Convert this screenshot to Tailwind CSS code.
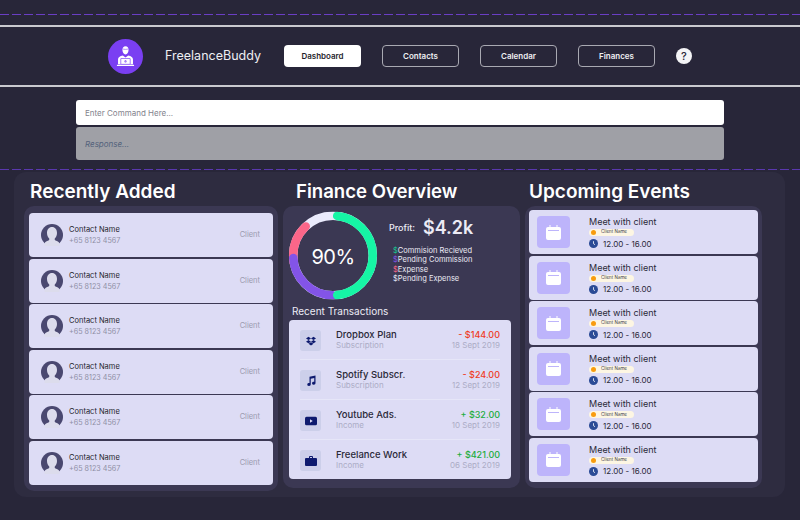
<!DOCTYPE html>
<html lang="en">
<head>
    <meta charset="UTF-8">
    <meta name="viewport" content="width=device-width, initial-scale=1.0">
    <title>FreelanceBuddy</title>
    <script src="https://cdn.jsdelivr.net/npm/@tailwindcss/browser@4"></script>
</head>
<body class="w-[800px] h-[520px] overflow-hidden bg-[#282639] font-[Inter,sans-serif] text-white">
    <!-- Top guides -->
    <div class="pt-[14px]">
        <div class="h-[1px] bg-[repeating-linear-gradient(90deg,#6a3ec4_0_9px,transparent_9px_12px)]"></div>
    </div>
    <div class="mt-[10px] h-[2px] bg-[#c9c9cf]"></div>

    <!-- Nav -->
    <nav class="h-[58px] flex items-center pl-[108px]">
        <div class="w-[35px] h-[35px] rounded-full bg-[#7a3ff2] flex items-center justify-center">
            <svg class="w-[23px] h-[23px]" viewBox="0 0 24 24" fill="#fff">
                <path d="M8.800 5C8.800 2.600 10 1.200 12 1.200s3.200 1.400 3.200 3.800c0 2.600-1.300 4.900-3.200 4.900S8.800 7.600 8.800 5z"/>
                <path d="M8.900 4.100c1.800.6 4.400.6 6.200 0" stroke="#7a3ff2" stroke-width=".6" fill="none"/>
                <path d="M4.200 20v-5c0-2 1.800-3.300 5-4l2.800 2 2.800-2c3.200.7 5 2 5 4v5z"/>
                <rect x="6.800" y="13.800" width="10.400" height="6.600" rx=".5" fill="#7a3ff2"/>
                <rect x="7.500" y="14.500" width="9" height="5.200" fill="#fff"/>
                <circle cx="12" cy="17.100" r="1.100" fill="#7a3ff2"/>
                <circle cx="12" cy="17.100" r=".4" fill="#fff"/>
                <rect x="3" y="20.700" width="18" height="1.300" rx=".6"/>
            </svg>
        </div>
        <span class="ml-[22px] w-[97px] text-[12.500px] text-[#eeeef2] whitespace-nowrap">FreelanceBuddy</span>
        <div class="ml-[22px] flex items-center gap-[21px] text-[8px] font-semibold">
            <a class="w-[77px] h-[22px] flex items-center justify-center rounded-[4px] bg-white text-[#1f1e2c]">Dashboard</a>
            <a class="w-[77px] h-[22px] flex items-center justify-center rounded-[4px] border border-[#a9a9b2] text-[#eeeef2]">Contacts</a>
            <a class="w-[77px] h-[22px] flex items-center justify-center rounded-[4px] border border-[#a9a9b2] text-[#eeeef2]">Calendar</a>
            <a class="w-[77px] h-[22px] flex items-center justify-center rounded-[4px] border border-[#a9a9b2] text-[#eeeef2]">Finances</a>
            <span class="w-4 h-4 rounded-full bg-[#f4f4f6] text-[#2a2838] flex items-center justify-center text-[11px] font-medium">?</span>
        </div>
    </nav>
    <div class="h-[2px] bg-[#c9c9cf]"></div>

    <!-- Command box -->
    <div class="mt-[13px] ml-[76px] w-[648px] flex flex-col gap-[2px] text-[8px]">
        <div class="h-[25px] pl-[9px] flex items-center rounded-[3px] bg-white text-[#83838d]">Enter Command Here...</div>
        <div class="h-[33px] pl-[9px] flex items-center rounded-[3px] bg-[#9fa0a6] text-[#54637c] italic">Response...</div>
    </div>

    <div class="mt-[9px] h-[1px] bg-[repeating-linear-gradient(90deg,#5a38ae_0_9px,transparent_9px_12px)]"></div>

    <!-- Main panel -->
    <main class="mt-[2px] ml-[14px] w-[771px] h-[325px] rounded-[12px] bg-[#2e2c40] pl-[10px] flex gap-[5px]">
        <!-- Recently added -->
        <section class="w-[254px]">
            <h2 class="h-[34px] pl-[6px] flex items-center text-[19px] font-semibold pt-[6px]">Recently Added</h2>
            <div class="h-[285px] rounded-[10px] bg-[#3b3853] px-[5px] pt-[7px] flex flex-col gap-[1.500px]">
                <div class="h-[44px] rounded-[4px] bg-[#dddcf5] pl-[12px] pr-[13px] flex items-center">
                    <svg class="w-[22px] h-[22px]" viewBox="0 0 22 22"><circle cx="11" cy="11" r="11" fill="#4a4870"/><path d="M11 3C8 3 6 5.500 6 9c0 2.500 1 4.500 2.200 5.500.3.800 0 1.600-.8 2-1.500.7-3.300 1.200-3.800 3V22h14.800v-2.500c-.5-1.800-2.300-2.300-3.800-3-.8-.4-1.100-1.200-.8-2C15 13.500 16 11.500 16 9c0-3.500-2-6-5-6z" fill="#dcdcec"/></svg>
                    <div class="ml-[6px] text-[7.500px] leading-[11px]"><p class="text-[#1f1e2c]">Contact Name</p><p class="text-[7.200px] text-[#8f8fa5]">+65 8123 4567</p></div>
                    <span class="ml-auto text-[7.500px] text-[#9a9aae]">Client</span>
                </div>
                <div class="h-[44px] rounded-[4px] bg-[#dddcf5] pl-[12px] pr-[13px] flex items-center">
                    <svg class="w-[22px] h-[22px]" viewBox="0 0 22 22"><circle cx="11" cy="11" r="11" fill="#4a4870"/><path d="M11 3C8 3 6 5.500 6 9c0 2.500 1 4.500 2.200 5.500.3.800 0 1.600-.8 2-1.500.7-3.300 1.200-3.800 3V22h14.800v-2.500c-.5-1.800-2.300-2.300-3.800-3-.8-.4-1.100-1.200-.8-2C15 13.500 16 11.500 16 9c0-3.500-2-6-5-6z" fill="#dcdcec"/></svg>
                    <div class="ml-[6px] text-[7.500px] leading-[11px]"><p class="text-[#1f1e2c]">Contact Name</p><p class="text-[7.200px] text-[#8f8fa5]">+65 8123 4567</p></div>
                    <span class="ml-auto text-[7.500px] text-[#9a9aae]">Client</span>
                </div>
                <div class="h-[44px] rounded-[4px] bg-[#dddcf5] pl-[12px] pr-[13px] flex items-center">
                    <svg class="w-[22px] h-[22px]" viewBox="0 0 22 22"><circle cx="11" cy="11" r="11" fill="#4a4870"/><path d="M11 3C8 3 6 5.500 6 9c0 2.500 1 4.500 2.200 5.500.3.800 0 1.600-.8 2-1.500.7-3.300 1.200-3.800 3V22h14.800v-2.500c-.5-1.800-2.300-2.300-3.800-3-.8-.4-1.100-1.200-.8-2C15 13.500 16 11.500 16 9c0-3.500-2-6-5-6z" fill="#dcdcec"/></svg>
                    <div class="ml-[6px] text-[7.500px] leading-[11px]"><p class="text-[#1f1e2c]">Contact Name</p><p class="text-[7.200px] text-[#8f8fa5]">+65 8123 4567</p></div>
                    <span class="ml-auto text-[7.500px] text-[#9a9aae]">Client</span>
                </div>
                <div class="h-[44px] rounded-[4px] bg-[#dddcf5] pl-[12px] pr-[13px] flex items-center">
                    <svg class="w-[22px] h-[22px]" viewBox="0 0 22 22"><circle cx="11" cy="11" r="11" fill="#4a4870"/><path d="M11 3C8 3 6 5.500 6 9c0 2.500 1 4.500 2.200 5.500.3.800 0 1.600-.8 2-1.500.7-3.300 1.200-3.800 3V22h14.800v-2.500c-.5-1.800-2.300-2.300-3.800-3-.8-.4-1.100-1.200-.8-2C15 13.500 16 11.500 16 9c0-3.500-2-6-5-6z" fill="#dcdcec"/></svg>
                    <div class="ml-[6px] text-[7.500px] leading-[11px]"><p class="text-[#1f1e2c]">Contact Name</p><p class="text-[7.200px] text-[#8f8fa5]">+65 8123 4567</p></div>
                    <span class="ml-auto text-[7.500px] text-[#9a9aae]">Client</span>
                </div>
                <div class="h-[44px] rounded-[4px] bg-[#dddcf5] pl-[12px] pr-[13px] flex items-center">
                    <svg class="w-[22px] h-[22px]" viewBox="0 0 22 22"><circle cx="11" cy="11" r="11" fill="#4a4870"/><path d="M11 3C8 3 6 5.500 6 9c0 2.500 1 4.500 2.200 5.500.3.800 0 1.600-.8 2-1.500.7-3.300 1.200-3.800 3V22h14.800v-2.500c-.5-1.800-2.300-2.300-3.800-3-.8-.4-1.100-1.200-.8-2C15 13.500 16 11.500 16 9c0-3.500-2-6-5-6z" fill="#dcdcec"/></svg>
                    <div class="ml-[6px] text-[7.500px] leading-[11px]"><p class="text-[#1f1e2c]">Contact Name</p><p class="text-[7.200px] text-[#8f8fa5]">+65 8123 4567</p></div>
                    <span class="ml-auto text-[7.500px] text-[#9a9aae]">Client</span>
                </div>
                <div class="h-[44px] rounded-[4px] bg-[#dddcf5] pl-[12px] pr-[13px] flex items-center">
                    <svg class="w-[22px] h-[22px]" viewBox="0 0 22 22"><circle cx="11" cy="11" r="11" fill="#4a4870"/><path d="M11 3C8 3 6 5.500 6 9c0 2.500 1 4.500 2.200 5.500.3.800 0 1.600-.8 2-1.500.7-3.300 1.200-3.800 3V22h14.800v-2.500c-.5-1.800-2.300-2.300-3.800-3-.8-.4-1.100-1.200-.8-2C15 13.500 16 11.500 16 9c0-3.500-2-6-5-6z" fill="#dcdcec"/></svg>
                    <div class="ml-[6px] text-[7.500px] leading-[11px]"><p class="text-[#1f1e2c]">Contact Name</p><p class="text-[7.200px] text-[#8f8fa5]">+65 8123 4567</p></div>
                    <span class="ml-auto text-[7.500px] text-[#9a9aae]">Client</span>
                </div>
            </div>
        </section>

        <!-- Finance overview -->
        <section class="w-[237px]">
            <h2 class="h-[34px] pl-[13px] flex items-center text-[18.600px] font-semibold pt-[6px]">Finance Overview</h2>
            <div class="h-[282px] rounded-[10px] bg-[#3b3853] pt-[5px]">
                <div class="flex h-[89px] pl-[6px]">
                    <div class="relative w-[88px] h-[89px] pt-[2px] flex items-center justify-center">
                        <svg class="absolute inset-0 w-[88px] h-[89px] -rotate-90" viewBox="0 0 88 89" fill="none" stroke-width="8.500">
                            <circle cx="44" cy="44.500" r="39.800" pathLength="100" stroke="#eaeafc"/>
                            <circle cx="44" cy="44.500" r="39.800" pathLength="100" stroke="#fb6689" stroke-linecap="round" stroke-dasharray="16 84" stroke-dashoffset="-72"/>
                            <circle cx="44" cy="44.500" r="39.800" pathLength="100" stroke="#8354e8" stroke-linecap="round" stroke-dasharray="24 76" stroke-dashoffset="-50"/>
                            <circle cx="44" cy="44.500" r="39.800" pathLength="100" stroke="#16f5a5" stroke-linecap="round" stroke-dasharray="46.600 53.400" stroke-dashoffset="-1.700"/>
                        </svg>
                        <span class="text-[20px] tracking-[-0.5px]">90%</span>
                    </div>
                    <div class="ml-[12px] text-[7.500px] text-[#ecebf5]">
                        <div class="flex items-center h-[26px] mt-[4px]">
                            <span class="text-[9px] font-medium">Profit:</span>
                            <span class="ml-[8px] text-[18px] font-semibold leading-none">$4.2k</span>
                        </div>
                        <div class="mt-[5px] ml-[4px] leading-[9.400px] whitespace-nowrap">
                            <p><span class="text-[#16c993]">$</span>Commision Recieved</p>
                            <p><span class="text-[#8354e8]">$</span>Pending Commission</p>
                            <p><span class="text-[#fb6689]">$</span>Expense</p>
                            <p><span class="text-[#eaeafc]">$</span>Pending Expense</p>
                        </div>
                    </div>
                </div>
                <h3 class="mt-[4px] ml-[9px] text-[10px] leading-[14px] text-[#ecebf5]">Recent Transactions</h3>
                <div class="mt-[2px] ml-[6px] w-[222px] h-[159px] rounded-[4px] bg-[#dddcf5] px-[11px]">
                    <div class="pt-[10px] pb-[8px] flex border-b border-[#e6e6f8]">
                        <span class="w-[21px] h-[21px] rounded-[3px] bg-[#cccfea] flex items-center justify-center">
                            <svg class="w-[10px] h-[10px]" viewBox="0 0 24 24" fill="#0d1a6e"><path d="M6 1.800 0 5.700l6 3.900 6-3.900zM18 1.800l-6 3.900 6 3.900 6-3.900zM0 13.500l6 3.900 6-3.900-6-3.900zM18 9.600l-6 3.900 6 3.900 6-3.900zM6 18.700l6 3.900 6-3.900-6-3.900z"/></svg>
                        </span>
                        <div class="ml-[15px] text-[8px] leading-[11px]"><p class="text-[9.500px] leading-[10px] font-medium text-[#2a2938]">Dropbox Plan</p><p class="text-[#acacc6]">Subscription</p></div>
                        <div class="ml-auto text-right text-[8px] leading-[11px]"><p class="text-[9px] leading-[10px] font-medium text-[#ef3d1f]">- $144.00</p><p class="text-[#acacc6]">18 Sept 2019</p></div>
                    </div>
                    <div class="pt-[10px] pb-[8px] flex border-b border-[#e6e6f8]">
                        <span class="w-[21px] h-[21px] rounded-[3px] bg-[#cccfea] flex items-center justify-center">
                            <svg class="w-[12px] h-[12px]" viewBox="0 0 24 24" fill="#0d1a6e"><path d="M9 3.500 21 1v15.500a3.500 3 0 1 1-2.500-2.900V6.200L11.500 7.700v11.300a3.500 3 0 1 1-2.500-2.900z"/></svg>
                        </span>
                        <div class="ml-[15px] text-[8px] leading-[11px]"><p class="text-[9.500px] leading-[10px] font-medium text-[#2a2938]">Spotify Subscr.</p><p class="text-[#acacc6]">Subscription</p></div>
                        <div class="ml-auto text-right text-[8px] leading-[11px]"><p class="text-[9px] leading-[10px] font-medium text-[#ef3d1f]">- $24.00</p><p class="text-[#acacc6]">12 Sept 2019</p></div>
                    </div>
                    <div class="pt-[10px] pb-[8px] flex border-b border-[#e6e6f8]">
                        <span class="w-[21px] h-[21px] rounded-[3px] bg-[#cccfea] flex items-center justify-center">
                            <svg class="w-[12px] h-[12px]" viewBox="0 0 24 24"><rect y="3.500" width="24" height="17" rx="3" fill="#0d1a6e"/><path d="m10 8.500 5.500 3.500-5.500 3.500z" fill="#dddcf5"/></svg>
                        </span>
                        <div class="ml-[15px] text-[8px] leading-[11px]"><p class="text-[9.500px] leading-[10px] font-medium text-[#2a2938]">Youtube Ads.</p><p class="text-[#acacc6]">Income</p></div>
                        <div class="ml-auto text-right text-[8px] leading-[11px]"><p class="text-[9px] leading-[10px] font-medium text-[#22ad3c]">+ $32.00</p><p class="text-[#acacc6]">10 Sept 2019</p></div>
                    </div>
                    <div class="pt-[10px] flex">
                        <span class="w-[21px] h-[21px] rounded-[3px] bg-[#cccfea] flex items-center justify-center">
                            <svg class="w-[12px] h-[12px]" viewBox="0 0 24 24" fill="#0d1a6e"><path d="M8 6V4a2 2 0 0 1 2-2h4a2 2 0 0 1 2 2v2h6a2 2 0 0 1 2 2v12a2 2 0 0 1-2 2H2a2 2 0 0 1-2-2V8a2 2 0 0 1 2-2zm2 0h4V4h-4z"/></svg>
                        </span>
                        <div class="ml-[15px] text-[8px] leading-[11px]"><p class="text-[9.500px] leading-[10px] font-medium text-[#2a2938]">Freelance Work</p><p class="text-[#acacc6]">Income</p></div>
                        <div class="ml-auto text-right text-[8px] leading-[11px]"><p class="text-[9px] leading-[10px] font-medium text-[#22ad3c]">+ $421.00</p><p class="text-[#acacc6]">06 Sept 2019</p></div>
                    </div>
                </div>
            </div>
        </section>

        <!-- Upcoming events -->
        <section class="w-[237px]">
            <h2 class="h-[34px] pl-[4px] flex items-center text-[19px] font-semibold pt-[6px]">Upcoming Events</h2>
            <div class="h-[282px] rounded-[10px] bg-[#3b3853] px-[4px] pt-[4px] flex flex-col gap-[1.600px]">
                <div class="h-[44px] rounded-[4px] bg-[#dddcf5] pl-[8px] flex items-center">
                    <span class="w-[33px] h-[32px] rounded-[4px] bg-[#bdb4fb] flex items-center justify-center">
                        <svg class="w-[15px] h-[15px]" viewBox="0 0 15 15" fill="#fff"><path d="M3.500 0h1v2h6V0h1v2H13a2 2 0 0 1 2 2v9a2 2 0 0 1-2 2H2a2 2 0 0 1-2-2V4a2 2 0 0 1 2-2h1.500z"/><rect x="2" y="5" width="11" height="1" fill="#bdb4fb"/></svg>
                    </span>
                    <div class="ml-[19px]">
                        <p class="text-[9px] leading-[11px] text-[#2a2938]">Meet with client</p>
                        <div class="mt-[2px] w-[45px] h-[7px] rounded-full bg-[#fdf6e3] flex items-center pl-[2px]"><span class="w-[5px] h-[5px] rounded-full bg-[#f89c0e]"></span><span class="ml-[5px] text-[4.500px] leading-none text-[#3a3a48]">Client Name</span></div>
                        <div class="mt-[3px] flex items-center"><svg class="w-[9px] h-[9px]" viewBox="0 0 9 9"><circle cx="4.500" cy="4.500" r="4.500" fill="#2b4b96"/><path d="M4.500 2.200v2.500l1.500 1" stroke="#fff" stroke-width=".8" fill="none"/></svg><span class="ml-[5px] text-[8px] leading-none text-[#2a2938]">12.00 - 16.00</span></div>
                    </div>
                </div>
                <div class="h-[44px] rounded-[4px] bg-[#dddcf5] pl-[8px] flex items-center">
                    <span class="w-[33px] h-[32px] rounded-[4px] bg-[#bdb4fb] flex items-center justify-center">
                        <svg class="w-[15px] h-[15px]" viewBox="0 0 15 15" fill="#fff"><path d="M3.500 0h1v2h6V0h1v2H13a2 2 0 0 1 2 2v9a2 2 0 0 1-2 2H2a2 2 0 0 1-2-2V4a2 2 0 0 1 2-2h1.500z"/><rect x="2" y="5" width="11" height="1" fill="#bdb4fb"/></svg>
                    </span>
                    <div class="ml-[19px]">
                        <p class="text-[9px] leading-[11px] text-[#2a2938]">Meet with client</p>
                        <div class="mt-[2px] w-[45px] h-[7px] rounded-full bg-[#fdf6e3] flex items-center pl-[2px]"><span class="w-[5px] h-[5px] rounded-full bg-[#f89c0e]"></span><span class="ml-[5px] text-[4.500px] leading-none text-[#3a3a48]">Client Name</span></div>
                        <div class="mt-[3px] flex items-center"><svg class="w-[9px] h-[9px]" viewBox="0 0 9 9"><circle cx="4.500" cy="4.500" r="4.500" fill="#2b4b96"/><path d="M4.500 2.200v2.500l1.500 1" stroke="#fff" stroke-width=".8" fill="none"/></svg><span class="ml-[5px] text-[8px] leading-none text-[#2a2938]">12.00 - 16.00</span></div>
                    </div>
                </div>
                <div class="h-[44px] rounded-[4px] bg-[#dddcf5] pl-[8px] flex items-center">
                    <span class="w-[33px] h-[32px] rounded-[4px] bg-[#bdb4fb] flex items-center justify-center">
                        <svg class="w-[15px] h-[15px]" viewBox="0 0 15 15" fill="#fff"><path d="M3.500 0h1v2h6V0h1v2H13a2 2 0 0 1 2 2v9a2 2 0 0 1-2 2H2a2 2 0 0 1-2-2V4a2 2 0 0 1 2-2h1.500z"/><rect x="2" y="5" width="11" height="1" fill="#bdb4fb"/></svg>
                    </span>
                    <div class="ml-[19px]">
                        <p class="text-[9px] leading-[11px] text-[#2a2938]">Meet with client</p>
                        <div class="mt-[2px] w-[45px] h-[7px] rounded-full bg-[#fdf6e3] flex items-center pl-[2px]"><span class="w-[5px] h-[5px] rounded-full bg-[#f89c0e]"></span><span class="ml-[5px] text-[4.500px] leading-none text-[#3a3a48]">Client Name</span></div>
                        <div class="mt-[3px] flex items-center"><svg class="w-[9px] h-[9px]" viewBox="0 0 9 9"><circle cx="4.500" cy="4.500" r="4.500" fill="#2b4b96"/><path d="M4.500 2.200v2.500l1.500 1" stroke="#fff" stroke-width=".8" fill="none"/></svg><span class="ml-[5px] text-[8px] leading-none text-[#2a2938]">12.00 - 16.00</span></div>
                    </div>
                </div>
                <div class="h-[44px] rounded-[4px] bg-[#dddcf5] pl-[8px] flex items-center">
                    <span class="w-[33px] h-[32px] rounded-[4px] bg-[#bdb4fb] flex items-center justify-center">
                        <svg class="w-[15px] h-[15px]" viewBox="0 0 15 15" fill="#fff"><path d="M3.500 0h1v2h6V0h1v2H13a2 2 0 0 1 2 2v9a2 2 0 0 1-2 2H2a2 2 0 0 1-2-2V4a2 2 0 0 1 2-2h1.500z"/><rect x="2" y="5" width="11" height="1" fill="#bdb4fb"/></svg>
                    </span>
                    <div class="ml-[19px]">
                        <p class="text-[9px] leading-[11px] text-[#2a2938]">Meet with client</p>
                        <div class="mt-[2px] w-[45px] h-[7px] rounded-full bg-[#fdf6e3] flex items-center pl-[2px]"><span class="w-[5px] h-[5px] rounded-full bg-[#f89c0e]"></span><span class="ml-[5px] text-[4.500px] leading-none text-[#3a3a48]">Client Name</span></div>
                        <div class="mt-[3px] flex items-center"><svg class="w-[9px] h-[9px]" viewBox="0 0 9 9"><circle cx="4.500" cy="4.500" r="4.500" fill="#2b4b96"/><path d="M4.500 2.200v2.500l1.500 1" stroke="#fff" stroke-width=".8" fill="none"/></svg><span class="ml-[5px] text-[8px] leading-none text-[#2a2938]">12.00 - 16.00</span></div>
                    </div>
                </div>
                <div class="h-[44px] rounded-[4px] bg-[#dddcf5] pl-[8px] flex items-center">
                    <span class="w-[33px] h-[32px] rounded-[4px] bg-[#bdb4fb] flex items-center justify-center">
                        <svg class="w-[15px] h-[15px]" viewBox="0 0 15 15" fill="#fff"><path d="M3.500 0h1v2h6V0h1v2H13a2 2 0 0 1 2 2v9a2 2 0 0 1-2 2H2a2 2 0 0 1-2-2V4a2 2 0 0 1 2-2h1.500z"/><rect x="2" y="5" width="11" height="1" fill="#bdb4fb"/></svg>
                    </span>
                    <div class="ml-[19px]">
                        <p class="text-[9px] leading-[11px] text-[#2a2938]">Meet with client</p>
                        <div class="mt-[2px] w-[45px] h-[7px] rounded-full bg-[#fdf6e3] flex items-center pl-[2px]"><span class="w-[5px] h-[5px] rounded-full bg-[#f89c0e]"></span><span class="ml-[5px] text-[4.500px] leading-none text-[#3a3a48]">Client Name</span></div>
                        <div class="mt-[3px] flex items-center"><svg class="w-[9px] h-[9px]" viewBox="0 0 9 9"><circle cx="4.500" cy="4.500" r="4.500" fill="#2b4b96"/><path d="M4.500 2.200v2.500l1.500 1" stroke="#fff" stroke-width=".8" fill="none"/></svg><span class="ml-[5px] text-[8px] leading-none text-[#2a2938]">12.00 - 16.00</span></div>
                    </div>
                </div>
                <div class="h-[44px] rounded-[4px] bg-[#dddcf5] pl-[8px] flex items-center">
                    <span class="w-[33px] h-[32px] rounded-[4px] bg-[#bdb4fb] flex items-center justify-center">
                        <svg class="w-[15px] h-[15px]" viewBox="0 0 15 15" fill="#fff"><path d="M3.500 0h1v2h6V0h1v2H13a2 2 0 0 1 2 2v9a2 2 0 0 1-2 2H2a2 2 0 0 1-2-2V4a2 2 0 0 1 2-2h1.500z"/><rect x="2" y="5" width="11" height="1" fill="#bdb4fb"/></svg>
                    </span>
                    <div class="ml-[19px]">
                        <p class="text-[9px] leading-[11px] text-[#2a2938]">Meet with client</p>
                        <div class="mt-[2px] w-[45px] h-[7px] rounded-full bg-[#fdf6e3] flex items-center pl-[2px]"><span class="w-[5px] h-[5px] rounded-full bg-[#f89c0e]"></span><span class="ml-[5px] text-[4.500px] leading-none text-[#3a3a48]">Client Name</span></div>
                        <div class="mt-[3px] flex items-center"><svg class="w-[9px] h-[9px]" viewBox="0 0 9 9"><circle cx="4.500" cy="4.500" r="4.500" fill="#2b4b96"/><path d="M4.500 2.200v2.500l1.500 1" stroke="#fff" stroke-width=".8" fill="none"/></svg><span class="ml-[5px] text-[8px] leading-none text-[#2a2938]">12.00 - 16.00</span></div>
                    </div>
                </div>
            </div>
        </section>
    </main>
</body>
</html>
